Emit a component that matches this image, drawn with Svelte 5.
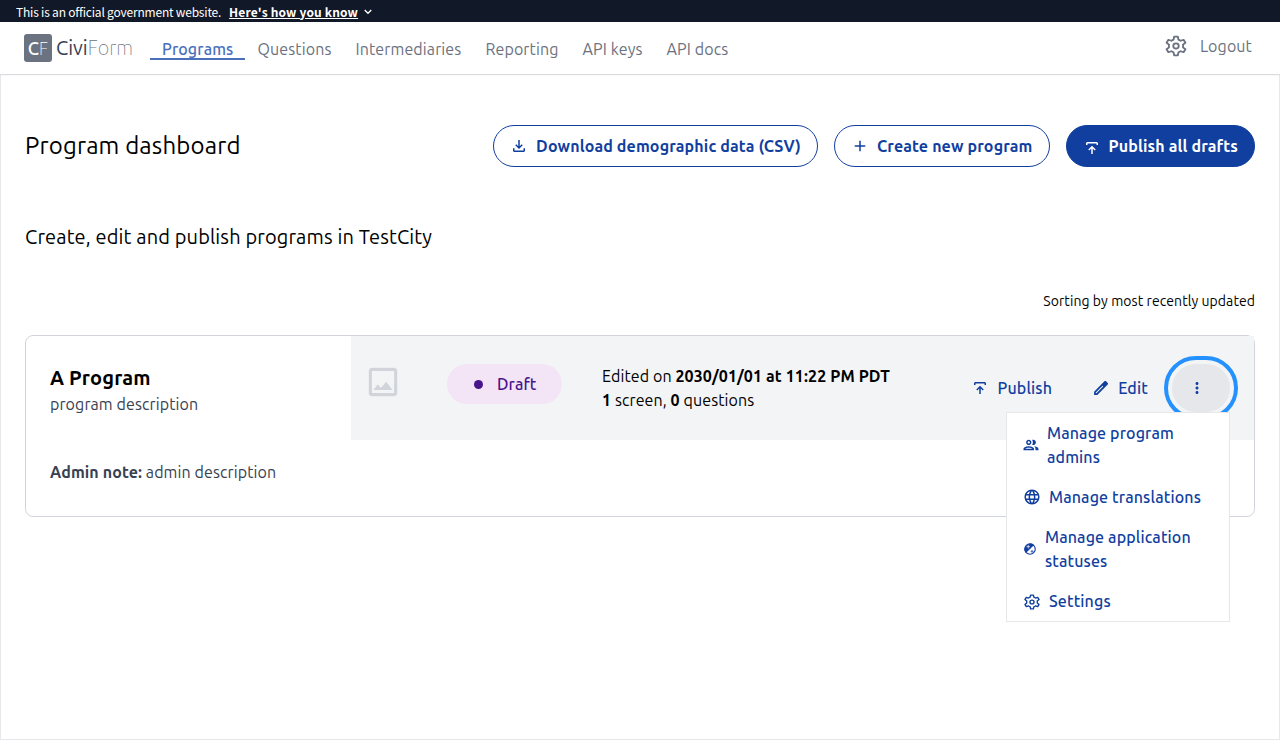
<script>
  const icons = {
    download: 'M18 15v3H6v-3H4v3c0 1.1.9 2 2 2h12c1.1 0 2-.9 2-2v-3h-2zm-1-4-1.41-1.41L13 12.17V4h-2v8.17L8.41 9.59 7 11l5 5 5-5z',
    plus: 'M19 13h-6v6h-2v-6H5v-2h6V5h2v6h6v2z',
    publish: 'M4 8V6c0-1.100.9-2 2-2h12c1.100 0 2 .9 2 2v2h-2V6H6v2H4zm7 12v-7.200l-2.600 2.600L7 14l5-5 5 5-1.400 1.400-2.600-2.600V20h-2z',
    edit: 'M14.060 9.020l.92.92L5.920 19H5v-.92l9.060-9.060M17.660 2.600c-.4 0-.8.15-1.100.45L2.800 16.900V21.200h4.300L20.950 7.400c.6-.6.6-1.600 0-2.200l-2.150-2.150c-.3-.3-.7-.45-1.140-.45z',
    more: 'M12 8c1.1 0 2-.9 2-2s-.9-2-2-2-2 .9-2 2 .9 2 2 2zm0 2c-1.1 0-2 .9-2 2s.9 2 2 2 2-.9 2-2-.9-2-2-2zm0 6c-1.1 0-2 .9-2 2s.9 2 2 2 2-.9 2-2-.9-2-2-2z',
    image: 'M19 5v14H5V5h14m0-2H5c-1.100 0-2 .9-2 2v14c0 1.100.9 2 2 2h14c1.100 0 2-.9 2-2V5c0-1.100-.9-2-2-2zM5.900 17l2.800-3.600 2 2.400L14 11.900 18 17H5.900z',
    group: 'M9 12c1.930 0 3.500-1.570 3.500-3.500S10.930 5 9 5 5.500 6.570 5.500 8.500 7.070 12 9 12zm0-5c.83 0 1.500.67 1.500 1.500S9.830 10 9 10s-1.500-.67-1.500-1.500S8.170 7 9 7zm0 6.750c-2.340 0-7 1.170-7 3.500V19h14v-1.750c0-2.330-4.660-3.500-7-3.500zM4.340 17c.84-.58 2.870-1.250 4.660-1.250s3.820.67 4.660 1.250H4.340zm11.700-3.190c1.160.84 1.960 1.960 1.960 3.440V19h4v-1.750c0-2.020-3.500-3.170-5.960-3.440zM15 12c1.930 0 3.500-1.570 3.500-3.500S16.930 5 15 5c-.54 0-1.040.13-1.500.35.63.89 1 1.980 1 3.150s-.37 2.260-1 3.150c.46.22.96.35 1.500.35z',
    globe: 'M11.990 2C6.470 2 2 6.480 2 12s4.470 10 9.990 10C17.520 22 22 17.520 22 12S17.520 2 11.990 2zm6.930 6h-2.950c-.32-1.250-.78-2.450-1.380-3.560 1.840.63 3.370 1.910 4.330 3.560zM12 4.040c.83 1.200 1.480 2.530 1.910 3.960h-3.820c.43-1.430 1.080-2.760 1.910-3.960zM4.260 14C4.100 13.360 4 12.690 4 12s.1-1.360.26-2h3.380c-.08.66-.14 1.320-.14 2s.06 1.340.14 2H4.260zm.82 2h2.950c.32 1.250.78 2.450 1.380 3.560-1.840-.63-3.370-1.900-4.330-3.560zm2.950-8H5.080c.96-1.660 2.490-2.930 4.330-3.560C8.810 5.550 8.350 6.750 8.030 8zM12 19.960c-.83-1.200-1.480-2.530-1.910-3.960h3.820c-.43 1.430-1.080 2.760-1.910 3.960zM14.340 14H9.660c-.09-.66-.16-1.320-.16-2s.07-1.350.16-2h4.680c.09.65.16 1.320.16 2s-.07 1.340-.16 2zm.25 5.560c.6-1.110 1.060-2.310 1.380-3.560h2.950c-.96 1.650-2.490 2.930-4.330 3.560zM16.360 14c.08-.66.14-1.320.14-2s-.06-1.340-.14-2h3.380c.16.64.26 1.310.26 2s-.1 1.360-.26 2h-3.380z'
  };

  const nav = ['Programs', 'Questions', 'Intermediaries', 'Reporting', 'API keys', 'API docs'];

  const menu = [
    { icon: 'group', size: 18, gap: 7, left: 15, lines: ['Manage program', 'admins'] },
    { icon: 'globe', size: 18, gap: 8, left: 16, lines: ['Manage translations'] },
    { icon: 'status', size: 14, gap: 8, left: 16, lines: ['Manage application', 'statuses'] },
    { icon: 'settings', size: 18, gap: 8, left: 16, lines: ['Settings'] }
  ];
</script>

{#snippet icon(name, size)}
  <svg class="icon icon-{name}" width={size} height={size} viewBox="0 0 24 24" fill="currentColor" aria-hidden="true">
    {#if name === 'status'}
      <circle cx="12" cy="12" r="9" fill="none" stroke="currentColor" stroke-width="2" />
      <path d="M5 19A10 10 0 0 1 19 5z" />
      <path d="M6 8h6M9 5v6" stroke="#fff" stroke-width="1.200" />
      <path d="M13 16h5M15.500 13.500v5" stroke="currentColor" stroke-width="1.200" />
    {:else if name === 'settings'}
      <g fill="none" stroke="currentColor" stroke-width="1.700" stroke-linejoin="round" transform="translate(12 12) scale(1.090 1.010) translate(-12 -12)">
        <path d="M10.300 2.800h3.400l.5 2.900a6.700 6.700 0 0 1 2 1.150l2.750-1 1.700 2.950-2.250 1.900a6.700 6.700 0 0 1 0 2.600l2.250 1.900-1.700 2.950-2.750-1a6.700 6.700 0 0 1-2 1.150l-.5 2.900h-3.400l-.5-2.900a6.700 6.700 0 0 1-2-1.150l-2.750 1-1.700-2.950 2.250-1.900a6.700 6.700 0 0 1 0-2.600l-2.250-1.900 1.700-2.950 2.750 1a6.700 6.700 0 0 1 2-1.150z" />
        <circle cx="12" cy="12" r="2.500" />
      </g>
    {:else}
      <path d={icons[name]} fill-rule={name === 'edit' ? 'evenodd' : 'nonzero'} />
    {/if}
  </svg>
{/snippet}

<div class="page">
  <div class="banner">
    <span class="official">This is an official government website.</span>
    <a class="how" href="#how">Here's how you know</a>
    <svg width="8" height="6" viewBox="0 0 8 6"><path d="M.7 1l3.300 3.300L7.300 1" fill="none" stroke="#fff" stroke-width="1.300" /></svg>
  </div>

  <header>
    <div class="logo">
      <span class="mark"><b>C</b><i>F</i></span>
      <span class="word"><b>Civi</b><i>Form</i></span>
    </div>
    <nav>
      {#each nav as label, i}
        <a href="#nav" class:active={i === 0}>{label}</a>
      {/each}
    </nav>
    <div class="session">
      {@render icon('settings', 24)}
      <a href="#logout">Logout</a>
    </div>
  </header>

  <main>
    <div class="top">
      <h1>Program dashboard</h1>
      <div class="buttons">
        <button>{@render icon('download', 18)}Download demographic data (CSV)</button>
        <button>{@render icon('plus', 18)}Create new program</button>
        <button class="solid">{@render icon('publish', 18)}Publish all drafts</button>
      </div>
    </div>
    <h2>Create, edit and publish programs in TestCity</h2>
    <p class="sorting">Sorting by most recently updated</p>

    <section class="card">
      <div class="row">
        <div class="info">
          <h3>A Program</h3>
          <p>program description</p>
        </div>
        <div class="state">
          <div class="picture">{@render icon('image', 38)}</div>
          <div class="pill"><span class="dot"></span>Draft</div>
          <div class="edited">
            <p>Edited on <b>2030/01/01 at 11:22 PM PDT</b></p>
            <p><b>1</b> screen, <b>0</b> questions</p>
          </div>
          <div class="actions">
            <button class="text">{@render icon('publish', 18)}Publish</button>
            <button class="text edit-button">{@render icon('edit', 18)}Edit</button>
            <div class="dropdown">
              <button class="kebab" aria-label="More">{@render icon('more', 18)}</button>
              <div class="menu">
                {#each menu as item}
                  <button style="padding-left: {item.left}px; gap: {item.gap}px">
                    {@render icon(item.icon, item.size)}
                    <span class="lines">
                      {#each item.lines as line}<span>{line}</span>{/each}
                    </span>
                  </button>
                {/each}
              </div>
            </div>
          </div>
        </div>
      </div>
      <p class="note"><b>Admin note:</b> admin description</p>
    </section>
  </main>
</div>

<style>
  :global(body) { background: #fff; }
  .page, .page * { box-sizing: border-box; letter-spacing: .0066em; }
  .page {
    display: flex;
    flex-direction: column;
    height: 740px;
    overflow: hidden;
    color: #000;
    font: 16px/24px Ubuntu, "Noto Sans", sans-serif;
  }
  h1, h2, h3, p { margin: 0; font-weight: 400; }
  b { font-weight: 700; }
  a { color: inherit; text-decoration: none; }
  i { font-style: normal; }
  button { font: inherit; margin: 0; border: 0; padding: 0; background: none; color: #113f9f; white-space: nowrap; }
  .icon { flex: none; display: block; }

  .banner {
    display: flex;
    align-items: center;
    height: 22px;
    padding: 1px 16px 0;
    background: #111827;
    color: #fff;
    font: 12px/20px "Source Sans Pro", "Noto Sans CJK SC", sans-serif;
  }
  .banner svg { margin-top: 1px; }
  .page .official { letter-spacing: -.2px; }
  .page .how { margin: 0 6px 0 8px; font-weight: 700; text-decoration: underline; letter-spacing: .16px; }

  header {
    display: flex;
    height: 52px;
    padding: 0 28px 0 24px;
    color: #6b7280;
    box-shadow: 0 1px 2px rgba(0, 0, 0, .08);
    position: relative;
  }
  .logo { display: flex; align-items: center; gap: 4px; width: 126px; height: 52px; }
  .mark {
    display: flex;
    justify-content: center;
    width: 28px;
    height: 28px;
    border-radius: 3px;
    background: #6b7280;
    color: #fff;
    font-size: 18px;
    line-height: 29px;
  }
  .mark b { font-weight: 500; }
  .mark i { font-weight: 100; }
  .word { display: flex; font-size: 20px; line-height: 28px; }
  .page .word b { font-weight: 450; color: #374151; letter-spacing: 0; }
  .page .word i { font-weight: 100; letter-spacing: 0; }
  nav { display: flex; padding-top: 14px; }
  nav a { height: 24px; padding: 0 12px; line-height: 26px; }
  .page nav a { letter-spacing: .0075em; }
  nav a.active { color: #4a70bc; font-weight: 500; border-bottom: 2px solid #4a70bc; }
  .session { display: flex; align-items: center; gap: 12px; height: 48px; margin-left: auto; }

  main { flex: 1; border: 1px solid #e5e7eb; padding: 50px 24px 0; }
  .top { display: flex; justify-content: space-between; align-items: center; height: 42px; }
  h1 { font-size: 24px; line-height: 32px; }
  .buttons { display: flex; gap: 16px; }
  .page .buttons button {
    display: flex;
    align-items: center;
    height: 42px;
    padding: 0 16px;
    gap: 8px;
    border: 1px solid #113f9f;
    border-radius: 21px;
    font-weight: 700;
    letter-spacing: .0085em;
  }
  .page .buttons .solid { background: #113f9f; color: #fff; }
  .solid .icon { position: relative; top: 2px; }
  h2 { margin-top: 56px; font-size: 20px; line-height: 28px; }
  .sorting { margin-top: 40px; text-align: right; font-size: 14px; line-height: 20px; }
  .page .sorting { letter-spacing: .005em; }

  .card { height: 182px; margin-top: 24px; border: 1px solid #d1d5db; border-radius: 8px; }
  .row { display: flex; height: 104px; }
  .info { width: 325px; padding: 28px 0 0 24px; color: #374151; }
  h3 { font-size: 20px; line-height: 28px; font-weight: 700; color: #000; }
  .state { display: flex; flex: 1; background: #f3f4f6; }
  .picture { width: 96px; padding: 27px 0 0 13px; color: #d1d5db; }
  .pill {
    display: flex;
    align-items: center;
    width: 115px;
    height: 40px;
    margin-top: 28px;
    padding-left: 27px;
    border-radius: 20px;
    background: #f3e5f5;
    color: #4a148c;
    font-weight: 500;
  }
  .dot { width: 9px; height: 9px; margin-right: 14px; border-radius: 50%; background: #4a148c; }
  .edited { margin-left: 40px; padding-top: 28px; }
  .actions { display: flex; align-items: center; margin-left: auto; padding-right: 24px; font-weight: 500; }
  .text { display: flex; align-items: center; gap: 8px; height: 48px; font-weight: 500; }
  .page .text { letter-spacing: .01em; }
  .edit-button { margin-left: 40px; }
  .dropdown { position: relative; margin-left: 24px; }
  .kebab {
    display: flex;
    align-items: center;
    width: 58px;
    height: 48px;
    padding-left: 16px;
    border-radius: 24px;
    background: #e5e7eb;
    outline: 4px solid #2491ff;
    outline-offset: 4px;
  }
  .menu {
    position: absolute;
    z-index: 2;
    top: 48px;
    right: 0;
    width: 224px;
    border: 1px solid #e5e7eb;
    background: #fff;
  }
  .menu button { display: flex; align-items: center; width: 100%; padding: 8px 0; text-align: left; font-weight: 500; }
  .page .menu span { letter-spacing: .0085em; }
  .lines { display: flex; flex-direction: column; }
  .menu .icon-settings { position: relative; top: 1px; }
  .note { padding: 20px 0 0 24px; color: #374151; }
</style>
